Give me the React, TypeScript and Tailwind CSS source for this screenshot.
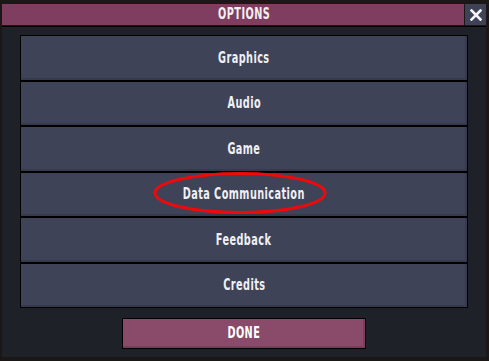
const items = ["Graphics", "Audio", "Game", "Data Communication", "Feedback", "Credits"];
const heights = ["h-[44px]", "h-[43px]", "h-[44px]", "h-[43px]", "h-[44px]", "h-[43px]"];

const font = { fontFamily: '"DejaVu Sans Condensed", "DejaVu Sans", sans-serif' };

function Label({ children }: { children: React.ReactNode }) {
  return <span className="inline-block scale-x-[0.72] whitespace-nowrap tracking-[0.6px]">{children}</span>;
}

export default function App() {
  return (
    <div className="relative w-[489px] h-[361px] overflow-hidden bg-[#1b1716] pl-[2px] pt-[4px]" style={font}>
      <div className="w-[484px] flex gap-[1px]">
        <div className="flex-1 h-[21px] bg-[#7f3e5f] pl-[22px] flex items-center justify-center text-[#f2eef2] text-[15px] font-bold">
          <Label>OPTIONS</Label>
        </div>
        <div className="w-[21px] h-[21px] bg-[#3e4257] flex items-center justify-center">
          <svg width="12" height="12" viewBox="0 0 12 12">
            <path d="M1.5 1.5 L10.5 10.5 M10.5 1.5 L1.5 10.5" stroke="#f4f4f6" strokeWidth="2.6" strokeLinecap="square" />
          </svg>
        </div>
      </div>
      <div className="mt-[1px] w-[484px] h-[331px] bg-[#1f2129] border-t border-black pt-[8px] px-[18px] flex flex-col items-center">
        <div className="w-[448px] border border-black bg-black flex flex-col gap-[2px]">
          {items.map((it, i) => (
            <div
              key={it}
              className={`${heights[i]} bg-[#3f4358] shadow-[inset_-2px_-2px_0_#363a4c] flex items-center justify-center text-[#f0f0f4] text-[15px] font-bold`}
            >
              <Label>{it}</Label>
            </div>
          ))}
        </div>
        <div className="mt-[10px] w-[244px] h-[31px] border border-black bg-[#8a4a69] shadow-[inset_-2px_-2px_0_#7a3d5c] flex items-center justify-center text-white text-[15px] font-bold">
          <Label>DONE</Label>
        </div>
      </div>
      <svg className="absolute left-0 top-0 pointer-events-none" width="489" height="361">
        <ellipse cx="240" cy="193" rx="85" ry="19.5" fill="none" stroke="#ee0a0a" strokeWidth="3" />
      </svg>
    </div>
  );
}
